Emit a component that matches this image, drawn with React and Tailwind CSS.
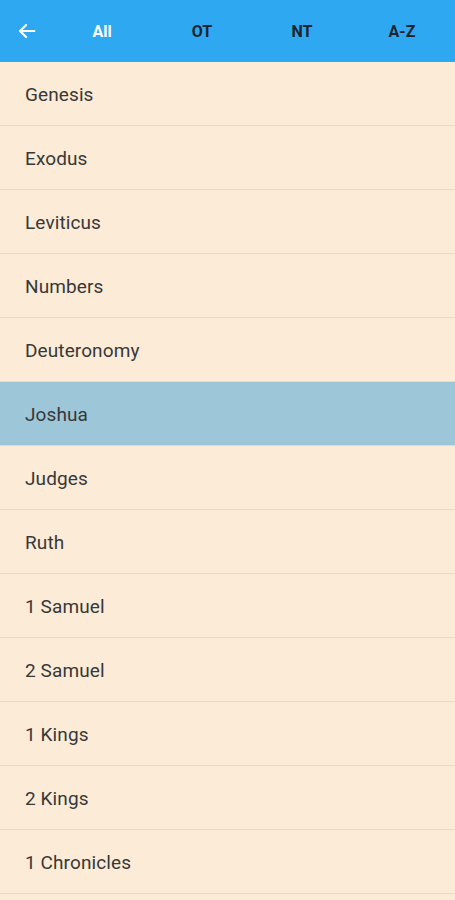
import React from "react";

const books = [
  "Genesis",
  "Exodus",
  "Leviticus",
  "Numbers",
  "Deuteronomy",
  "Joshua",
  "Judges",
  "Ruth",
  "1 Samuel",
  "2 Samuel",
  "1 Kings",
  "2 Kings",
  "1 Chronicles",
];

export default function App() {
  return (
    <div className="w-[455px] h-[900px] overflow-hidden bg-[#fbebd7] font-['Roboto',sans-serif]">
      <div className="h-[62px] bg-[#2fa8f2] flex items-center">
        <div className="w-[52px] h-full flex items-center justify-center pl-[2px]">
          <svg width="22" height="22" viewBox="0 0 24 24" fill="none" stroke="white" strokeWidth="2.4" strokeLinecap="round" strokeLinejoin="round">
            <path d="M20 12H4.5" />
            <path d="M11 5.5L4.5 12L11 18.5" />
          </svg>
        </div>
        <div className="flex-1 flex h-full pt-[2px]">
          {["All", "OT", "NT", "A-Z"].map((t, i) => (
            <div
              key={t}
              className={`w-[100px] flex items-center justify-center text-[16px] font-bold ${i === 0 ? "text-white" : "text-[#1c2430]"}`}
            >
              {t}
            </div>
          ))}
        </div>
      </div>
      <div className="flex flex-col">
        {books.map((b) => (
          <div
            key={b}
            className={`h-[64px] shrink-0 flex items-center pl-[25px] pt-[3px] text-[19px] tracking-[0.1px] text-[#383838] border-b border-[#e8dac8] ${b === "Joshua" ? "bg-[#9dc6d8] text-[#222]" : ""}`}
          >
            {b}
          </div>
        ))}
        <div className="h-[64px] shrink-0" />
      </div>
    </div>
  );
}
